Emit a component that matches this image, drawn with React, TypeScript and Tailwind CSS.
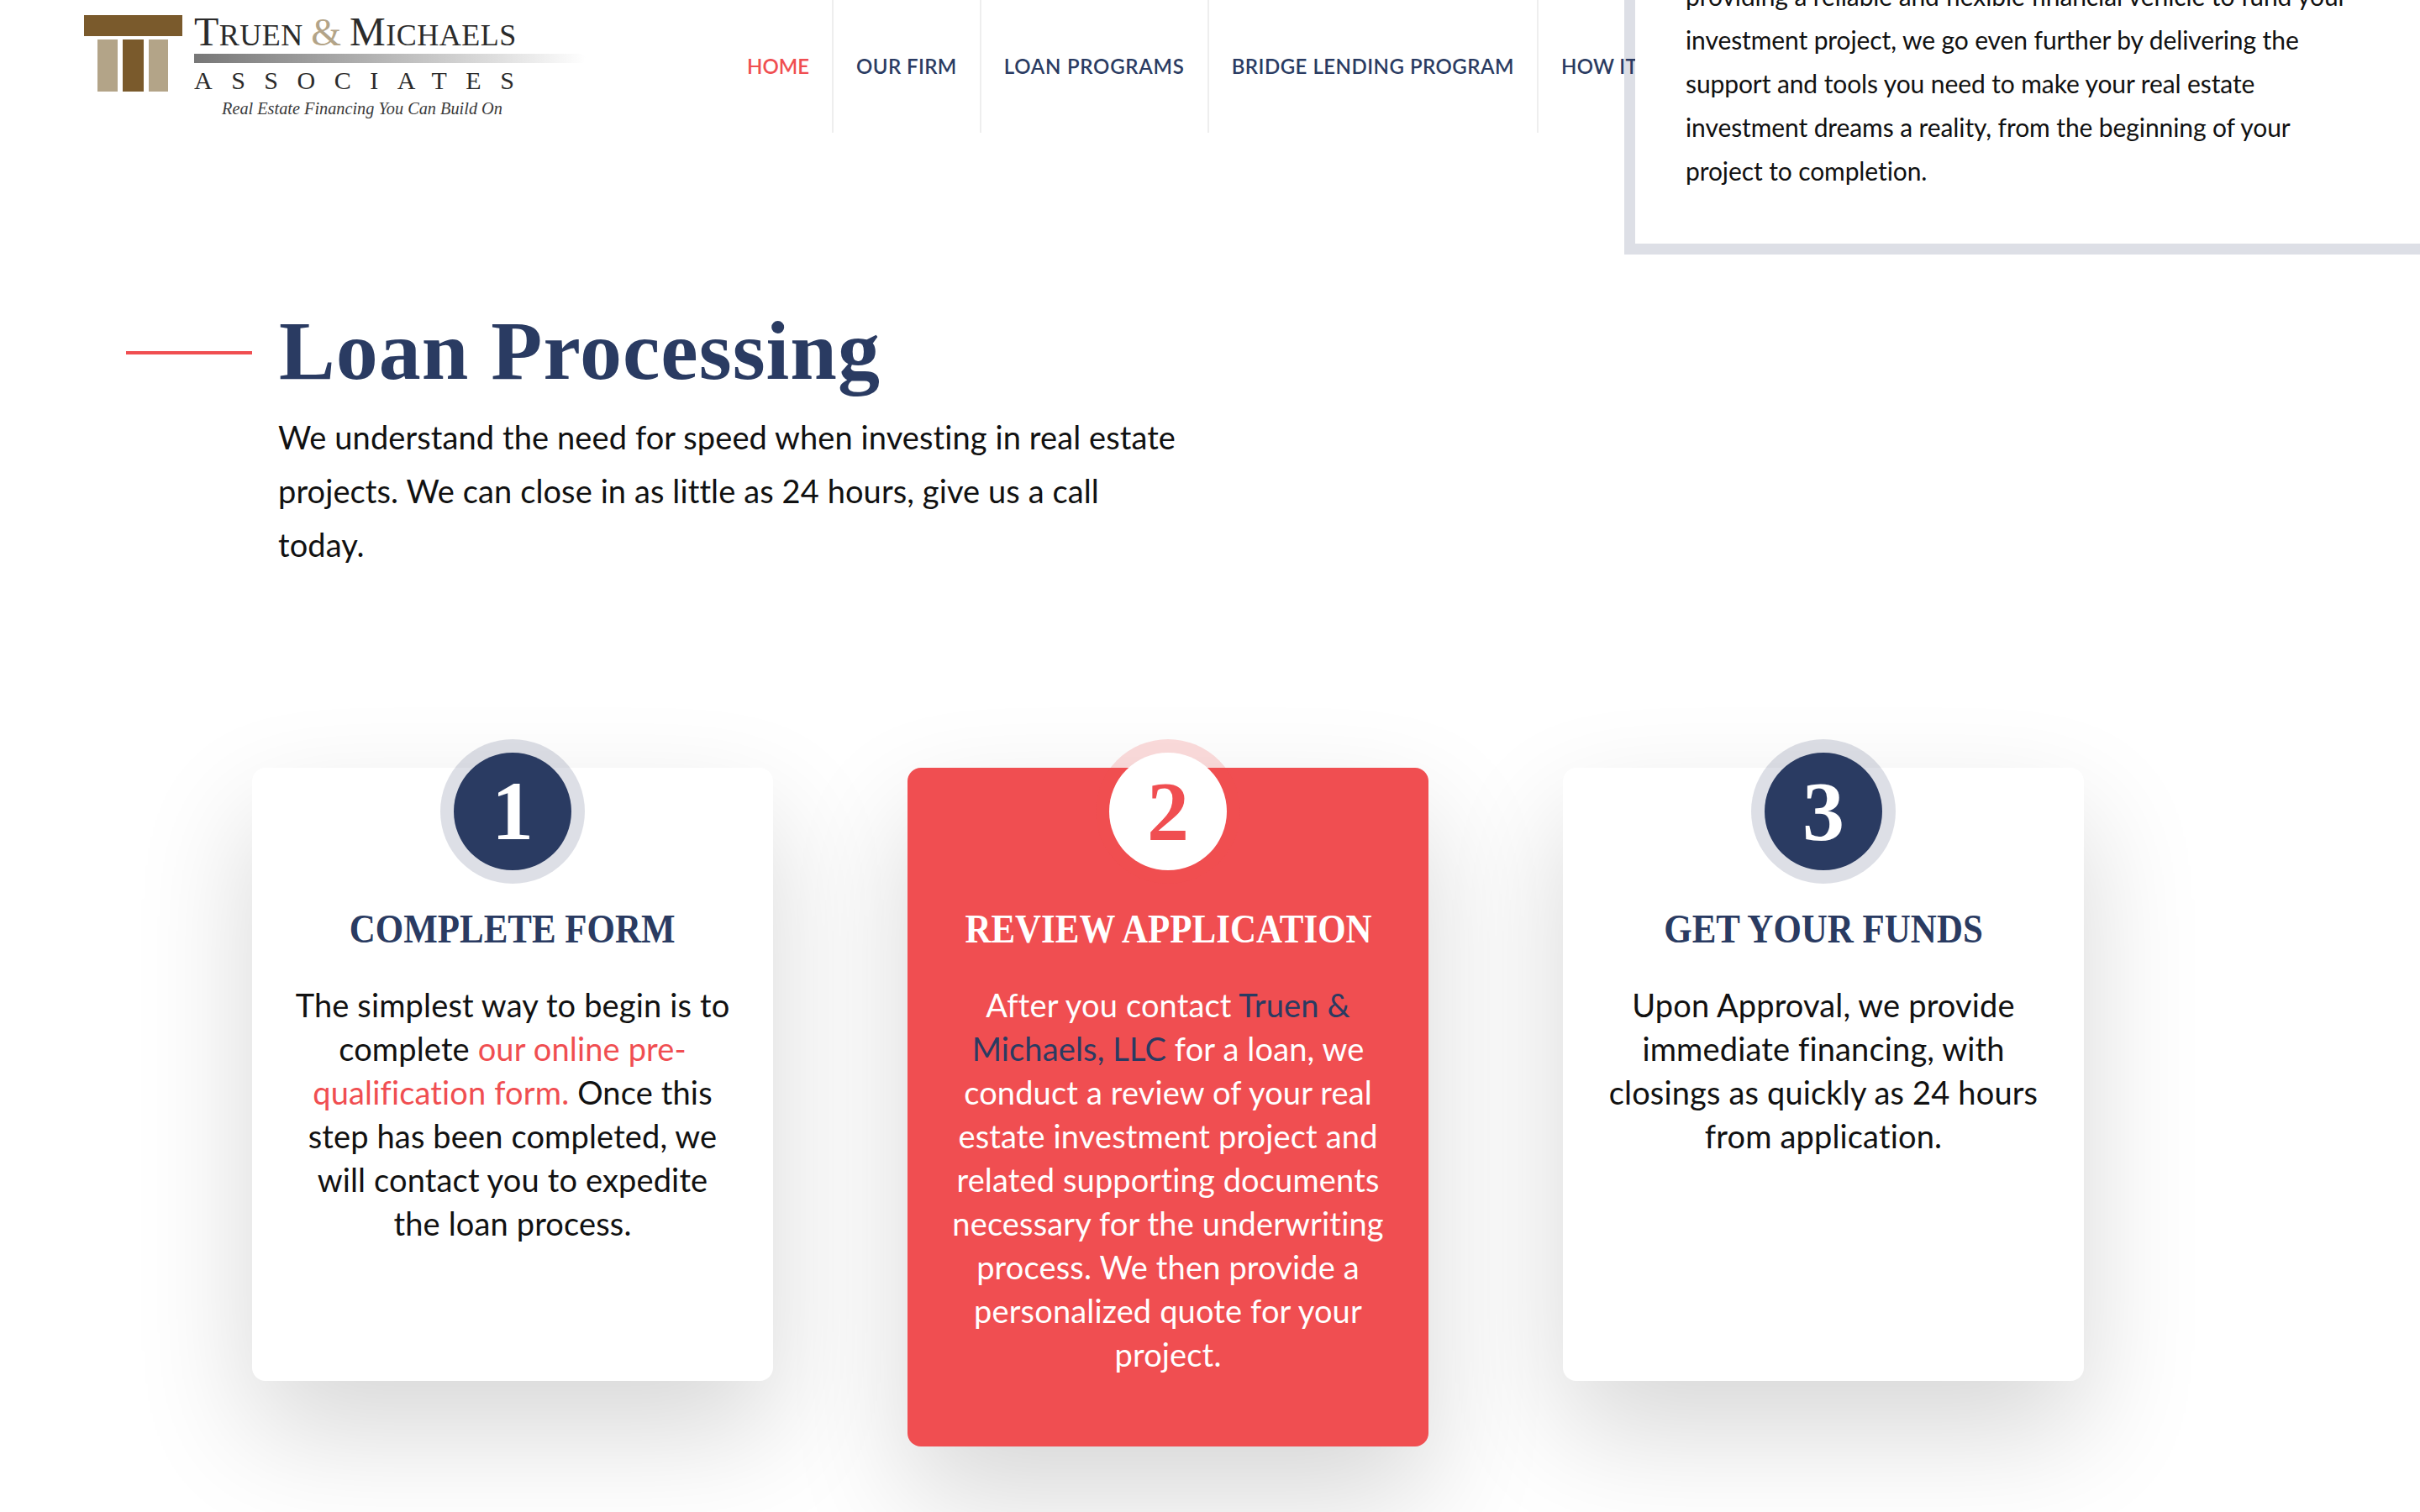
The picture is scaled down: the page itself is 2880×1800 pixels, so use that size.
const NAV = [
  { label: 'HOME', cls: 'text-[#f04e51]' },
  { label: 'OUR FIRM', cls: 'tracking-[0.4px]' },
  { label: 'LOAN PROGRAMS', cls: 'tracking-[0.75px]' },
  { label: 'BRIDGE LENDING PROGRAM', cls: 'tracking-[0.48px]' },
  { label: 'HOW IT WORKS', cls: 'tracking-[0.3px]' },
];

function LogoMark() {
  return (
    <svg width="117" height="91" viewBox="0 0 117 91" className="shrink-0">
      <rect x="0" y="0" width="117" height="25" fill="#7a5a2c" />
      <rect x="16" y="29" width="24" height="62" fill="#b3a488" />
      <rect x="46" y="29" width="25" height="62" fill="#7a5a2c" />
      <rect x="77" y="29" width="23" height="62" fill="#b3a488" />
    </svg>
  );
}

function Logo() {
  return (
    <div className="flex w-[862px] shrink-0 pl-[100px] pt-[18px] font-['Liberation_Serif',serif] text-[#2b2b2b]">
      <LogoMark />
      <div className="ml-[14px] flex flex-col">
        <div className="h-[40px] whitespace-nowrap text-[36px] leading-[40px] tracking-[0.5px]">
          <span className="text-[48px]">T</span>RUEN <span className="text-[46px] text-[#b3a488]">&amp;</span>{' '}
          <span className="text-[48px]">M</span>ICHAELS
        </div>
        <div className="mt-[6px] h-[11px] w-[466px] rounded-r-full bg-gradient-to-r from-[#777777] to-[#ffffff]" />
        <div className="mt-[6px] whitespace-nowrap text-[30px] leading-[30px] tracking-[22.5px]">ASSOCIATES</div>
        <div className="ml-[33px] mt-[5px] whitespace-nowrap text-[20.3px] italic leading-[26px] text-[#3a3a3a]">
          Real Estate Financing You Can Build On
        </div>
      </div>
    </div>
  );
}

function NavBar() {
  return (
    <nav className="flex h-[158px] font-['Lato',sans-serif] text-[24px] font-semibold text-[#2a3b62]">
      {NAV.map((item) => (
        <a
          key={item.label}
          className={`flex items-center whitespace-nowrap border-r-2 border-[#eeeeee] px-[27px] ${item.cls}`}
        >
          {item.label}
        </a>
      ))}
    </nav>
  );
}

function StepCard({
  n,
  title,
  active,
  tall,
  children,
}: {
  n: number;
  title: string;
  active?: boolean;
  tall?: boolean;
  children: React.ReactNode;
}) {
  return (
    <div
      className={`flex w-[620px] shrink-0 flex-col items-center rounded-[16px] text-center shadow-[0_60px_140px_rgba(0,0,0,0.16)] ${
        tall ? 'h-[808px]' : 'h-[730px]'
      } ${active ? 'bg-[#f04e51] text-white' : 'bg-white text-[#111111]'}`}
    >
      <div
        className={`-mt-[18px] flex h-[140px] w-[140px] items-center justify-center rounded-full font-['Liberation_Serif',serif] text-[100px] font-bold leading-none ${
          active
            ? 'bg-white text-[#f04e51] shadow-[0_0_0_16px_rgba(240,78,81,0.2)]'
            : 'bg-[#2a3b62] text-white shadow-[0_0_0_16px_rgba(42,59,98,0.16)]'
        }`}
      >
        {n}
      </div>
      <h3
        className={`mt-[40px] scale-x-[0.895] whitespace-nowrap font-['Liberation_Serif',serif] text-[48px] font-bold leading-[60px] ${
          active ? 'text-white' : 'text-[#2a3b62]'
        }`}
      >
        {title}
      </h3>
      <p className="mt-[34px] whitespace-nowrap font-['Lato',sans-serif] text-[38px] leading-[52px] tracking-[0.15px]">
        {children}
      </p>
    </div>
  );
}

export default function App() {
  return (
    <div className="relative h-[1800px] w-full overflow-hidden bg-white">
      <header className="flex">
        <Logo />
        <NavBar />
      </header>

      {/* panel that hangs from the section above, its border is see-through so the nav shows under it */}
      <aside className="absolute left-[1933px] right-0 top-[-31px] border-b-[13px] border-l-[13px] border-[rgba(42,59,98,0.16)] bg-white bg-clip-padding pb-[61px] pl-[60px] font-['Lato',sans-serif] text-[30px] leading-[52px] tracking-[-0.1px] text-[#111111]">
        <p className="whitespace-nowrap">
          providing a reliable and flexible financial vehicle to fund your
          <br />
          investment project, we go even further by delivering the
          <br />
          support and tools you need to make your real estate
          <br />
          investment dreams a reality, from the beginning of your
          <br />
          project to completion.
        </p>
      </aside>

      <main>
        <div className="ml-[150px] mt-[210px] flex items-center gap-[32px]">
          <span className="mt-[3px] h-[4px] w-[150px] bg-[#f04e51]" />
          <h1 className="font-['Liberation_Serif',serif] text-[100px] font-bold leading-[100px] tracking-[1px] text-[#2a3b62]">
            Loan Processing
          </h1>
        </div>
        <p className="ml-[331px] mt-[20px] whitespace-nowrap font-['Lato',sans-serif] text-[38px] leading-[64px] tracking-[0.1px] text-[#111111]">
          We understand the need for speed when investing in real estate
          <br />
          projects. We can close in as little as 24 hours, give us a call
          <br />
          today.
        </p>

        <section className="ml-[300px] mt-[234px] flex items-start gap-[160px]">
          <StepCard n={1} title="COMPLETE FORM">
            The simplest way to begin is to
            <br />
            complete <span className="text-[#f04e51]">our online pre-</span>
            <br />
            <span className="text-[#f04e51]">qualification form.</span> Once this
            <br />
            step has been completed, we
            <br />
            will contact you to expedite
            <br />
            the loan process.
          </StepCard>
          <StepCard n={2} title="REVIEW APPLICATION" active tall>
            After you contact <span className="text-[#2a3b62]">Truen &amp;</span>
            <br />
            <span className="text-[#2a3b62]">Michaels, LLC</span> for a loan, we
            <br />
            conduct a review of your real
            <br />
            estate investment project and
            <br />
            related supporting documents
            <br />
            necessary for the underwriting
            <br />
            process. We then provide a
            <br />
            personalized quote for your
            <br />
            project.
          </StepCard>
          <StepCard n={3} title="GET YOUR FUNDS">
            Upon Approval, we provide
            <br />
            immediate financing, with
            <br />
            closings as quickly as 24 hours
            <br />
            from application.
          </StepCard>
        </section>
      </main>
    </div>
  );
}
